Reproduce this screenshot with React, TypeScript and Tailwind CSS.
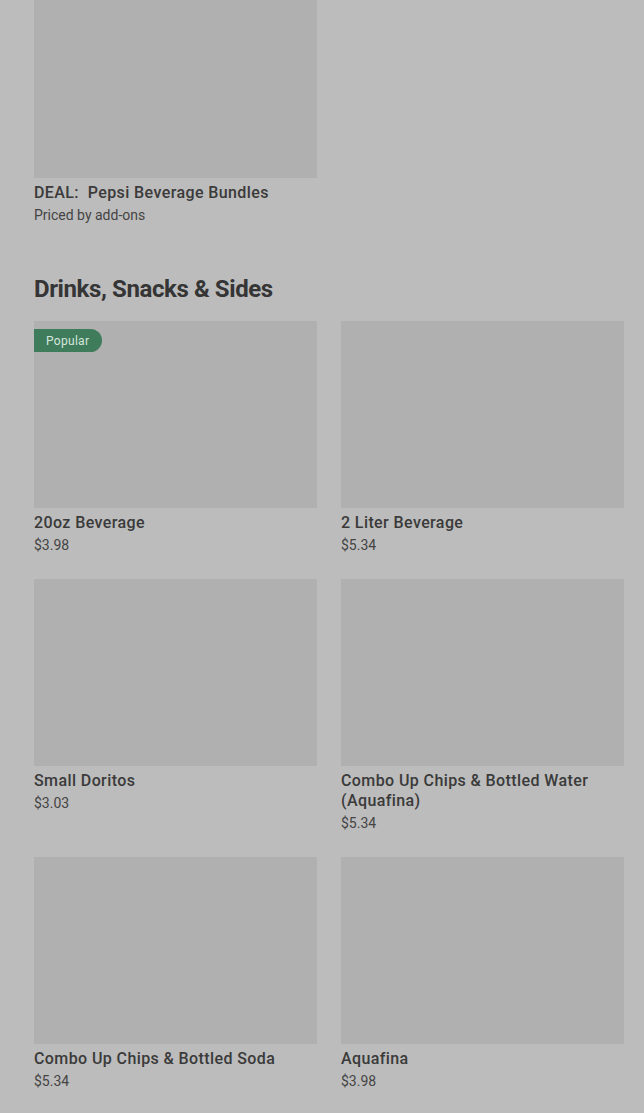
import React from "react";

const items = [
  { name: "20oz Beverage", price: "$3.98", popular: true },
  { name: "2 Liter Beverage", price: "$5.34" },
  { name: "Small Doritos", price: "$3.03" },
  { name: "Combo Up Chips & Bottled Water (Aquafina)", price: "$5.34" },
  { name: "Combo Up Chips & Bottled Soda", price: "$5.34" },
  { name: "Aquafina", price: "$3.98" },
];

function Card({ name, price, popular }: { name: string; price: string; popular?: boolean }) {
  return (
    <div className="flex flex-col">
      <div className="relative h-[187px] bg-[#b0b0b0]">
        {popular && (
          <div className="absolute left-0 top-[8px] h-[23px] pl-[12px] pr-[13px] flex items-center rounded-r-full bg-[#3f7c5c] text-[12px] tracking-[0.3px] text-[#d6e6dc]">
            Popular
          </div>
        )}
      </div>
      <div className="mt-[5px] text-[16px] leading-[20px] font-medium tracking-[0.4px] text-[#3a3a3a]">{name}</div>
      <div className="mt-[2px] text-[14px] leading-[20px] text-[#444]">{price}</div>
    </div>
  );
}

export default function App() {
  return (
    <div
      className="min-h-[1113px] bg-[#bcbcbc] pl-[34px] pr-[20px]"
      style={{ fontFamily: "Roboto, 'Liberation Sans', sans-serif" }}
    >
      <div className="grid grid-cols-2 gap-x-[24px]">
        <div className="flex flex-col">
          <div className="h-[178px] bg-[#b0b0b0]" />
          <div className="mt-[5px] text-[16px] leading-[20px] font-medium tracking-[0.4px] text-[#3a3a3a] whitespace-pre">
            {"DEAL:  Pepsi Beverage Bundles"}
          </div>
          <div className="mt-[2px] text-[14px] leading-[20px] text-[#444]">Priced by add-ons</div>
        </div>
      </div>
      <h2 className="mt-[48px] text-[24px] leading-[32px] font-bold tracking-[-0.4px] text-[#353535]">
        Drinks, Snacks &amp; Sides
      </h2>
      <div className="mt-[16px] grid grid-cols-2 gap-x-[24px] gap-y-[24px]">
        {items.map((it) => (
          <Card key={it.name} {...it} />
        ))}
      </div>
    </div>
  );
}
